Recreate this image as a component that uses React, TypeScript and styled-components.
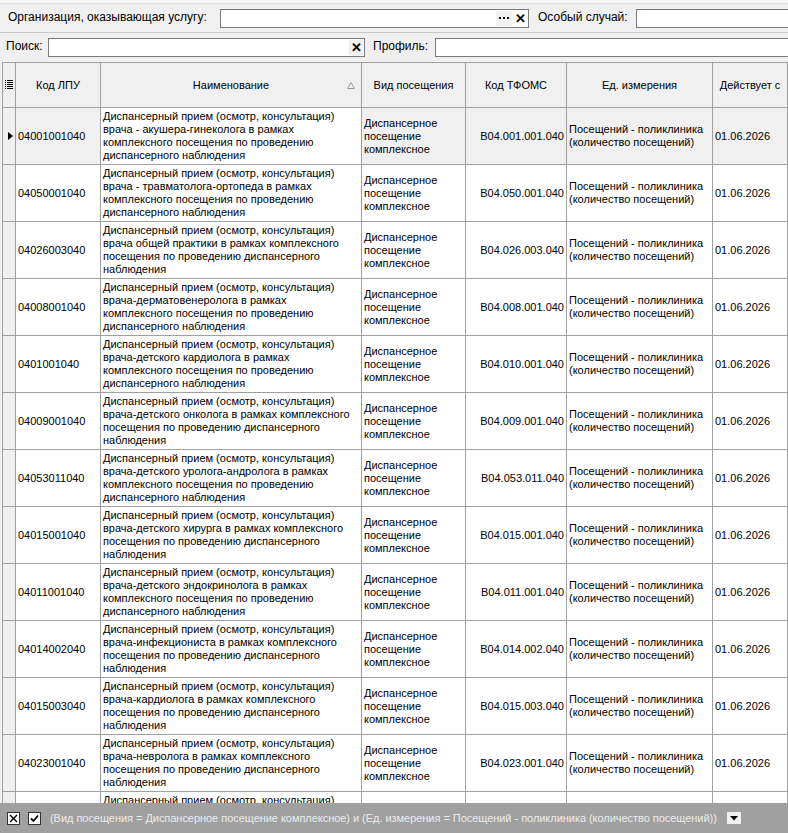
import styled, { createGlobalStyle } from "styled-components";

const GlobalStyle = createGlobalStyle`
  html, body {
    margin: 0;
    padding: 0;
    background: #f0f0f0;
  }
  body {
    font-family: "Liberation Sans", Arial, sans-serif;
    font-size: 11px;
    color: #000;
  }
`;

const rows = [
  ["04001001040", "врача - акушера-гинеколога в рамках\nкомплексного посещения по проведению\nдиспансерного наблюдения", "B04.001.001.040"],
  ["04050001040", "врача - травматолога-ортопеда в рамках\nкомплексного посещения по проведению\nдиспансерного наблюдения", "B04.050.001.040"],
  ["04026003040", "врача общей практики в рамках комплексного\nпосещения по проведению диспансерного\nнаблюдения", "B04.026.003.040"],
  ["04008001040", "врача-дерматовенеролога в рамках\nкомплексного посещения по проведению\nдиспансерного наблюдения", "B04.008.001.040"],
  ["0401001040", "врача-детского кардиолога в рамках\nкомплексного посещения по проведению\nдиспансерного наблюдения", "B04.010.001.040"],
  ["04009001040", "врача-детского онколога в рамках комплексного\nпосещения по проведению диспансерного\nнаблюдения", "B04.009.001.040"],
  ["04053011040", "врача-детского уролога-андролога в рамках\nкомплексного посещения по проведению\nдиспансерного наблюдения", "B04.053.011.040"],
  ["04015001040", "врача-детского хирурга в рамках комплексного\nпосещения по проведению диспансерного\nнаблюдения", "B04.015.001.040"],
  ["04011001040", "врача-детского эндокринолога в рамках\nкомплексного посещения по проведению\nдиспансерного наблюдения", "B04.011.001.040"],
  ["04014002040", "врача-инфекциониста в рамках комплексного\nпосещения по проведению диспансерного\nнаблюдения", "B04.014.002.040"],
  ["04015003040", "врача-кардиолога в рамках комплексного\nпосещения по проведению диспансерного\nнаблюдения", "B04.015.003.040"],
  ["04023001040", "врача-невролога в рамках комплексного\nпосещения по проведению диспансерного\nнаблюдения", "B04.023.001.040"],
];

const COLS = "13px 85px 261px 104px 101px 146px 1fr";
const TITLE = "Диспансерный прием (осмотр, консультация)";

export default function App() {
  return (
    <>
      <GlobalStyle />
      <Page>
        <TopStrip />
        <FilterRow $h={29} $pad={8} $border>
          <Label $w={212}>Организация, оказывающая услугу:</Label>
          <Input $w={309}>
            <InputBtn>
              <svg width="10" height="2" viewBox="0 0 10 2">
                <rect x="0" y="0" width="2" height="2" fill="#000" />
                <rect x="4" y="0" width="2" height="2" fill="#000" />
                <rect x="8" y="0" width="2" height="2" fill="#000" />
              </svg>
            </InputBtn>
            <ClearBtn>✕</ClearBtn>
          </Input>
          <Label $w={98} $left={9}>Особый случай:</Label>
          <Input $w={200} />
        </FilterRow>
        <FilterRow $h={28} $pad={6}>
          <Label $w={42}>Поиск:</Label>
          <Input $w={317}>
            <ClearBtn $shade>✕</ClearBtn>
          </Input>
          <Label $w={62} $left={8}>Профиль:</Label>
          <Input $w={400} />
        </FilterRow>

        <Grid>
          <HeadRow>
            <HeadCell>
              <svg width="8" height="10" viewBox="0 0 8 10">
                {[0, 2, 4, 6, 8].map((y) => (
                  <g key={y} fill="#000">
                    <rect x="0" y={y} width="1" height="1" />
                    <rect x="2" y={y} width="6" height="1" />
                  </g>
                ))}
              </svg>
            </HeadCell>
            <HeadCell>Код ЛПУ</HeadCell>
            <HeadCell>
              Наименование
              <SortMark width="8" height="7" viewBox="0 0 8 7">
                <path d="M4 0.5 L7.5 6.5 L0.5 6.5 Z" fill="none" stroke="#9a9a9a" strokeWidth="1" />
              </SortMark>
            </HeadCell>
            <HeadCell>Вид посещения</HeadCell>
            <HeadCell>Код ТФОМС</HeadCell>
            <HeadCell>Ед. измерения</HeadCell>
            <HeadCell>Действует с</HeadCell>
          </HeadRow>

          {rows.map(([code, name, tfoms], i) => (
            <Row key={code} $current={i === 0}>
              <Indicator>{i === 0 && <Arrow />}</Indicator>
              <Cell>{code}</Cell>
              <Cell $focused={i === 0}>{TITLE + "\n" + name}</Cell>
              <Cell>{"Диспансерное\nпосещение\nкомплексное"}</Cell>
              <Cell $right>{tfoms}</Cell>
              <Cell>{"Посещений - поликлиника\n(количество посещений)"}</Cell>
              <Cell>01.06.2026</Cell>
            </Row>
          ))}

          {/* last row, cut off by the filter bar */}
          <Row>
            <Indicator />
            <Cell />
            <Cell $top={2}>{TITLE}</Cell>
            <Cell />
            <Cell />
            <Cell />
            <Cell />
          </Row>
        </Grid>

        <FilterBar>
          <CheckBox>
            <svg width="9" height="9" viewBox="0 0 9 9">
              <path d="M1 1 L8 8 M8 1 L1 8" stroke="#000" strokeWidth="1.4" />
            </svg>
          </CheckBox>
          <CheckBox>
            <svg width="9" height="9" viewBox="0 0 9 9">
              <path d="M1 4.5 L3.5 7 L8 1.5" fill="none" stroke="#000" strokeWidth="1.8" />
            </svg>
          </CheckBox>
          <FilterText>
            (Вид посещения = Диспансерное посещение комплексное) и (Ед. измерения = Посещений - поликлиника (количество посещений))
          </FilterText>
          <DropBtn>
            <svg width="8" height="5" viewBox="0 0 8 5">
              <path d="M0 0 L8 0 L4 4.5 Z" fill="#000" />
            </svg>
          </DropBtn>
        </FilterBar>
      </Page>
    </>
  );
}

const Page = styled.div`
  width: 788px;
  height: 833px;
  overflow: hidden;
  display: flex;
  flex-direction: column;
  background: #f0f0f0;
`;

const TopStrip = styled.div`
  height: 3px;
  background: #f7f7f7;
  border-bottom: 1px solid #e3e3e3;
`;

const FilterRow = styled.div<{ $h: number; $pad: number; $border?: boolean }>`
  height: ${(p) => p.$h}px;
  display: flex;
  align-items: center;
  padding-left: ${(p) => p.$pad}px;
  box-sizing: border-box;
  font-size: 12px;
  white-space: nowrap;
  border-bottom: ${(p) => (p.$border ? "1px solid #c8c8c8" : "none")};
`;

const Label = styled.span<{ $w: number; $left?: number }>`
  flex: none;
  width: ${(p) => p.$w}px;
  margin-left: ${(p) => p.$left ?? 0}px;
  margin-top: -2px;
`;

const Input = styled.div<{ $w: number }>`
  flex: none;
  width: ${(p) => p.$w}px;
  height: 19px;
  box-sizing: border-box;
  border: 1px solid #7a7a7a;
  background: #fff;
  display: flex;
  justify-content: flex-end;
  align-items: stretch;
  padding: 1px;
  gap: 1px;
`;

const InputBtn = styled.span`
  width: 16px;
  background: #f0f0f0;
  display: flex;
  align-items: center;
  justify-content: center;
`;

const ClearBtn = styled.span<{ $shade?: boolean }>`
  width: 14px;
  background: ${(p) => (p.$shade ? "#f0f0f0" : "#fff")};
  font-weight: bold;
  font-size: 13px;
  display: flex;
  align-items: center;
  justify-content: center;
`;

const Grid = styled.div`
  flex: 1;
  margin-top: 1px;
  margin-left: 2px;
  border-top: 1px solid #a0a0a0;
  border-left: 1px solid #a0a0a0;
  overflow: hidden;
  background: #fff;
`;

const HeadRow = styled.div`
  display: grid;
  grid-template-columns: ${COLS};
  height: 45px;
  background: #f0f0f0;
`;

const HeadCell = styled.div`
  position: relative;
  display: flex;
  align-items: center;
  justify-content: center;
  border-right: 1px solid #a0a0a0;
  border-bottom: 1px solid #a0a0a0;
  font-size: 11px;
  white-space: nowrap;
`;

const SortMark = styled.svg`
  position: absolute;
  right: 6px;
  top: 19px;
`;

const Row = styled.div<{ $current?: boolean }>`
  display: grid;
  grid-template-columns: ${COLS};
  height: 57px;
  background: ${(p) => (p.$current ? "#f0f0f0" : "#fff")};
`;

const Indicator = styled.div`
  background: #f0f0f0;
  border-right: 1px solid #a0a0a0;
  border-bottom: 1px solid #a0a0a0;
  display: flex;
  align-items: center;
  justify-content: center;
`;

const Arrow = styled.span`
  width: 0;
  height: 0;
  border-top: 4px solid transparent;
  border-bottom: 4px solid transparent;
  border-left: 5px solid #000;
  margin-left: 2px;
`;

const Cell = styled.div<{ $right?: boolean; $focused?: boolean; $top?: number }>`
  border-right: 1px solid #a0a0a0;
  border-bottom: 1px solid #a0a0a0;
  display: flex;
  align-items: ${(p) => (p.$top !== undefined ? "flex-start" : "center")};
  justify-content: ${(p) => (p.$right ? "flex-end" : "flex-start")};
  padding: ${(p) => p.$top ?? 0}px 2px 0;
  white-space: pre;
  line-height: 13px;
  overflow: hidden;
  background: ${(p) => (p.$focused ? "#fff" : "transparent")};
`;

const FilterBar = styled.div`
  flex: none;
  height: 30px;
  background: #a0a0a0;
  display: flex;
  align-items: center;
  padding-left: 7px;
  gap: 8px;
  white-space: nowrap;
`;

const CheckBox = styled.span`
  flex: none;
  width: 13px;
  height: 13px;
  box-sizing: border-box;
  border: 1px solid #333;
  background: #fff;
  display: flex;
  align-items: center;
  justify-content: center;
`;

const FilterText = styled.span`
  color: #ececec;
  font-size: 11px;
  letter-spacing: -0.04px;
  margin-left: 1px;
`;

const DropBtn = styled.span`
  flex: none;
  width: 14px;
  height: 12px;
  margin-left: 2px;
  background: #f0f0f0;
  display: flex;
  align-items: center;
  justify-content: center;
`;
